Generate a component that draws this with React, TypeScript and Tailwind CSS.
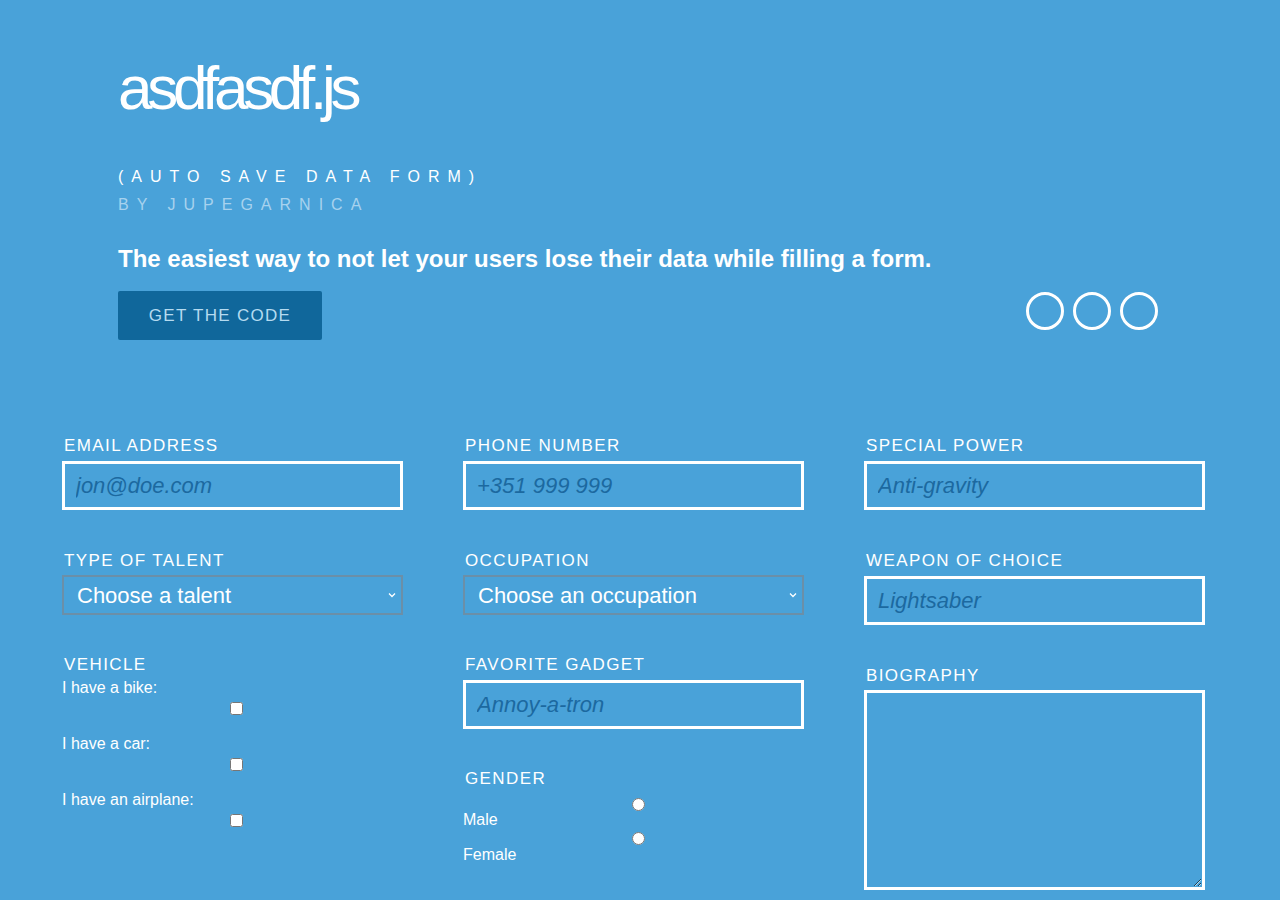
import React from 'react';

const font = { fontFamily: '"Liberation Sans", Arial, sans-serif' };

const Label = ({ children, className = '' }: { children: React.ReactNode; className?: string }) => (
  <label className={`block pl-[2px] text-[17px] leading-[22px] tracking-[1.4px] text-white ${className}`}>{children}</label>
);

const TextField = ({ label, placeholder }: { label: string; placeholder: string }) => (
  <div className="mb-[40px]">
    <Label className="mb-[4px]">{label}</Label>
    <input
      placeholder={placeholder}
      className="block w-full h-[49px] border-[3px] border-white bg-transparent pl-[11px] text-[22px] italic text-white outline-none placeholder:text-[#1c69a0]"
    />
  </div>
);

const SelectField = ({ label, text }: { label: string; text: string }) => (
  <div className="mb-[39px]">
    <Label className="mb-[3px]">{label}</Label>
    <div className="relative h-[40px] w-full border-2 border-[#6b8fa8]">
      <select className="h-full w-full appearance-none bg-transparent pl-[13px] text-[22px] text-white outline-none">
        <option>{text}</option>
      </select>
      <svg className="pointer-events-none absolute right-[5px] top-[15px]" width="8" height="6" viewBox="0 0 8 6">
        <path d="M1 1.5 L4 4.5 L7 1.5" fill="none" stroke="white" strokeWidth="1.3" />
      </svg>
    </div>
  </div>
);

export default function App() {
  return (
    <div className="min-h-[900px] w-full bg-[#49a2d9] overflow-hidden" style={font}>
      <header className="pl-[118px] pr-[118px] pt-[55px]">
        <h1 className="text-[62px] leading-[66px] tracking-[-5.3px] text-white">asdfasdf.js</h1>
        <p className="mt-[45px] text-[16px] leading-[22px] tracking-[8px] text-white">(AUTO SAVE DATA FORM)</p>
        <p className="mt-[6px] text-[16px] leading-[22px] tracking-[8px] text-[#a7d2ee]">BY JUPEGARNICA</p>
        <p className="mt-[29px] text-[24px] leading-[28px] font-bold text-white">
          The easiest way to not let your users lose their data while filling a form.
        </p>
        <div className="mt-[18px] flex items-center justify-between">
          <button className="h-[49px] w-[204px] rounded-[2px] bg-[#10679b] text-[17px] tracking-[1.3px] text-[#b5dbf0]">
            GET THE CODE
          </button>
          <div className="mb-[9px] mr-[4px] flex gap-[9px]">
            <span className="block h-[38px] w-[38px] rounded-full border-[3px] border-white" />
            <span className="block h-[38px] w-[38px] rounded-full border-[3px] border-white" />
            <span className="block h-[38px] w-[38px] rounded-full border-[3px] border-white" />
          </div>
        </div>
      </header>

      <form className="ml-[62px] mt-[95px] grid grid-cols-[341px_341px_341px] gap-x-[60px]">
        <div>
          <TextField label="EMAIL ADDRESS" placeholder="jon@doe.com" />
          <SelectField label="TYPE OF TALENT" text="Choose a talent" />
          <div>
            <Label className="mb-[3px]">VEHICLE</Label>
            {['I have a bike:', 'I have a car:', 'I have an airplane:'].map((t) => (
              <div key={t} className="mb-[20px]">
                <div className="text-[16px] leading-[18px] text-white">{t}</div>
                <input type="checkbox" className="m-0 ml-[168px] mt-[5px] block h-[13px] w-[13px]" />
              </div>
            ))}
          </div>
        </div>

        <div>
          <TextField label="PHONE NUMBER" placeholder="+351 999 999" />
          <SelectField label="OCCUPATION" text="Choose an occupation" />
          <TextField label="FAVORITE GADGET" placeholder="Annoy-a-tron" />
          <div className="-mt-[1px]">
            <Label>GENDER</Label>
            <div className="mt-[8px]">
              <input type="radio" name="gender" className="m-0 ml-[169px] block h-[13px] w-[13px]" />
              <div className="mt-[0px] text-[16px] leading-[18px] text-white">Male</div>
            </div>
            <div className="mt-[3px]">
              <input type="radio" name="gender" className="m-0 ml-[169px] block h-[13px] w-[13px]" />
              <div className="mt-[1px] text-[16px] leading-[18px] text-white">Female</div>
            </div>
          </div>
        </div>

        <div>
          <TextField label="SPECIAL POWER" placeholder="Anti-gravity" />
          <TextField label="WEAPON OF CHOICE" placeholder="Lightsaber" />
          <div>
            <Label className="mb-[3px]">BIOGRAPHY</Label>
            <textarea className="block h-[200px] w-full border-[3px] border-white bg-transparent text-white outline-none" />
          </div>
        </div>
      </form>
    </div>
  );
}
